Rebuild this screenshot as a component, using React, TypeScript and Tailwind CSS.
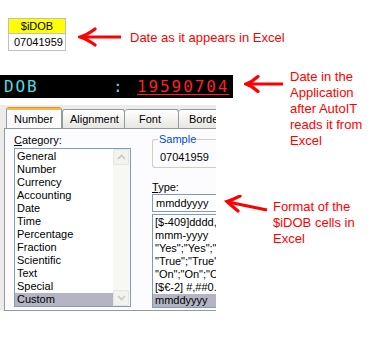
import React from "react";

const categories = [
  "General",
  "Number",
  "Currency",
  "Accounting",
  "Date",
  "Time",
  "Percentage",
  "Fraction",
  "Scientific",
  "Text",
  "Special",
  "Custom",
];

// only the start of each format shows, the dialog is cropped
const formats = [
  "[$-409]dddd, mmmm",
  "mmm-yyyy",
  '"Yes";"Yes";"No"',
  '"True";"True";"False"',
  '"On";"On";"Off"',
  "[$€-2] #,##0.00",
  "mmddyyyy",
];

const note = "font-['Liberation_Sans',Arial,sans-serif] text-[13px] leading-[16px] text-[#ff0000] whitespace-nowrap";
const ui = "font-['Liberation_Sans',Arial,sans-serif] text-[11px] leading-[13px] text-black";
const tab = "shrink-0 h-[19px] bg-gradient-to-b from-white to-[#e6e6e2] border border-b-0 border-[#919b9c] rounded-t-[3px] pt-[3px] whitespace-nowrap";

function ScrollBtn({ up }: { up?: boolean }) {
  return (
    <div className="h-[16px] w-[16px] rounded-[2px] border border-[#e6e6e0] bg-[#f2f2ee] flex items-center justify-center">
      <svg width="9" height="6" viewBox="0 0 9 6">
        <path
          d={up ? "M1 5 L4.5 1.5 L8 5" : "M1 1 L4.5 4.5 L8 1"}
          fill="none"
          stroke="#c9c9c0"
          strokeWidth="1.6"
        />
      </svg>
    </div>
  );
}

export default function App() {
  return (
    <div className="w-[371px] h-[337px] bg-white overflow-hidden">
      {/* excel cells + first note */}
      <div className="h-[60px] flex items-start">
        <div className={`ml-[8px] mt-[18px] w-[58px] ${ui}`}>
          <div className="h-[16px] bg-[#ffff00] border border-[#c0c0c0] flex items-center justify-center">
            $iDOB
          </div>
          <div className="h-[17px] border border-t-0 border-[#c0c0c0] flex items-center pl-[5px]">
            07041959
          </div>
        </div>
        <svg className="ml-[12px] mt-[27px]" width="44" height="20" viewBox="0 0 44 20">
          <path d="M3 10 L43 10" stroke="#ff0000" strokeWidth="3.2" fill="none" />
          <path d="M17 2 Q9 8 2 10 Q9 12 17 18" stroke="#ff0000" strokeWidth="3.2" fill="none" strokeLinecap="round" />
        </svg>
        <div className={`ml-[8px] mt-[30px] ${note}`}>Date as it appears in Excel</div>
      </div>

      <div className="flex items-start">
        {/* left: app field and excel dialog */}
        <div className="w-[233px] shrink-0">
          <div className="mt-[15px] h-[23px] bg-black flex items-center font-['DejaVu_Sans_Mono',monospace] text-[16px] leading-[18px] tracking-[1.9px] whitespace-nowrap">
            <span className="ml-[4px] w-[109px] text-[#50dce4]">DOB</span>
            <span className="w-[24px] text-[#50dce4]">:</span>
            <span className="text-[#ff2020] underline decoration-[#ff2020] underline-offset-[2px]">
              <span className="relative">
                1
                <span className="absolute left-[-2px] bottom-[-4px] w-[11px] h-[2px] bg-white" />
              </span>
              9590704
            </span>
          </div>

          {/* excel format cells dialog, cropped at the right */}
          <div className={`mt-[7px] w-[216px] h-[206px] bg-[#ececec] overflow-hidden ${ui}`}>
            <div className="pl-[6px] pt-[2px] h-[23px] flex items-end overflow-hidden">
              <div className="relative z-10 shrink-0 w-[56px] h-[22px] -mb-[1px] bg-[#fcfcfe] border-x border-[#919b9c] rounded-t-[3px] overflow-hidden">
                <div className="h-[3px] bg-[#f7b94a] border-t border-[#e68b2c]" />
                <div className="pl-[7px] pt-[3px]">Number</div>
              </div>
              <div className={`${tab} w-[63px] pl-[7px]`}>Alignment</div>
              <div className={`${tab} border-l-0 w-[54px] pl-[14px]`}>Font</div>
              <div className={`${tab} border-l-0 border-r-0 rounded-tr-none w-[37px] pl-[10px] overflow-hidden`}>Borde</div>
            </div>

            <div className="ml-[4px] w-[212px] h-[183px] bg-[#fcfcfe] border border-r-0 border-[#919b9c] flex">
              {/* category column */}
              <div className="ml-[9px] pt-[5px] w-[117px] shrink-0">
                <div className="h-[14px]">
                  <span className="underline">C</span>ategory:
                </div>
                <div className="h-[159px] border border-[#7f9db9] bg-white flex">
                  <div className="flex-1 pt-[1px]">
                    {categories.map((c) => (
                      <div
                        key={c}
                        className={`h-[13px] pl-[2px] ${c === "Custom" ? "bg-[#b4b4c3]" : ""}`}
                      >
                        {c}
                      </div>
                    ))}
                  </div>
                  <div className="w-[17px] bg-[#f7f7f3] flex flex-col justify-between">
                    <ScrollBtn up />
                    <ScrollBtn />
                  </div>
                </div>
              </div>

              {/* sample / type column */}
              <div className="ml-[21px] pt-[10px] flex-1 min-w-0 whitespace-nowrap">
                <div className="relative h-[29px] border border-r-0 border-[#d0d0bf] rounded-l-[3px] pl-[7px] pt-[11px]">
                  <span className="absolute left-[5px] top-[-7px] bg-[#fcfcfe] px-[1px] text-[#0046d5]">
                    Sample
                  </span>
                  07041959
                </div>
                <div className="mt-[13px] h-[13px]">
                  <span className="underline">T</span>ype:
                </div>
                <div className="h-[18px] border border-r-0 border-[#7f9db9] bg-white flex items-center pl-[3px]">
                  mmddyyyy
                </div>
                <div className="mt-[2px] h-[94px] border border-r-0 border-[#7f9db9] bg-white pt-[1px] overflow-hidden">
                  {formats.map((f) => (
                    <div
                      key={f}
                      className={`h-[13px] pl-[2px] overflow-hidden ${f === "mmddyyyy" ? "bg-[#b4b4c3]" : ""}`}
                    >
                      {f}
                    </div>
                  ))}
                </div>
              </div>
            </div>
          </div>
        </div>

        {/* right: notes */}
        <div className="flex-1">
          <div className="flex items-start">
            <svg className="ml-[11px] mt-[15px]" width="40" height="18" viewBox="0 0 40 18">
              <path d="M3 9 L39 9" stroke="#ff0000" strokeWidth="3.2" fill="none" />
              <path d="M14 1.5 Q8 7 2 9 Q8 11 14 16.5" stroke="#ff0000" strokeWidth="3.2" fill="none" strokeLinecap="round" />
            </svg>
            <div className={`ml-[6px] mt-[9px] ${note}`}>
              Date in the
              <br />
              Application
              <br />
              after AutoIT
              <br />
              reads it from
              <br />
              Excel
            </div>
          </div>
          <div className="flex items-start mt-[38px]">
            <svg className="-ml-[10px] mt-[8px]" width="46" height="20" viewBox="0 0 46 20">
              <path d="M5 7 L44 15" stroke="#ff0000" strokeWidth="3.2" fill="none" />
              <path d="M17 1 Q10 4.5 4 6.5 Q9 11 15 16" stroke="#ff0000" strokeWidth="3.2" fill="none" strokeLinecap="round" />
            </svg>
            <div className={`ml-[4px] mt-[12px] ${note}`}>
              Format of the
              <br />
              $iDOB cells in
              <br />
              Excel
            </div>
          </div>
        </div>
      </div>
    </div>
  );
}
